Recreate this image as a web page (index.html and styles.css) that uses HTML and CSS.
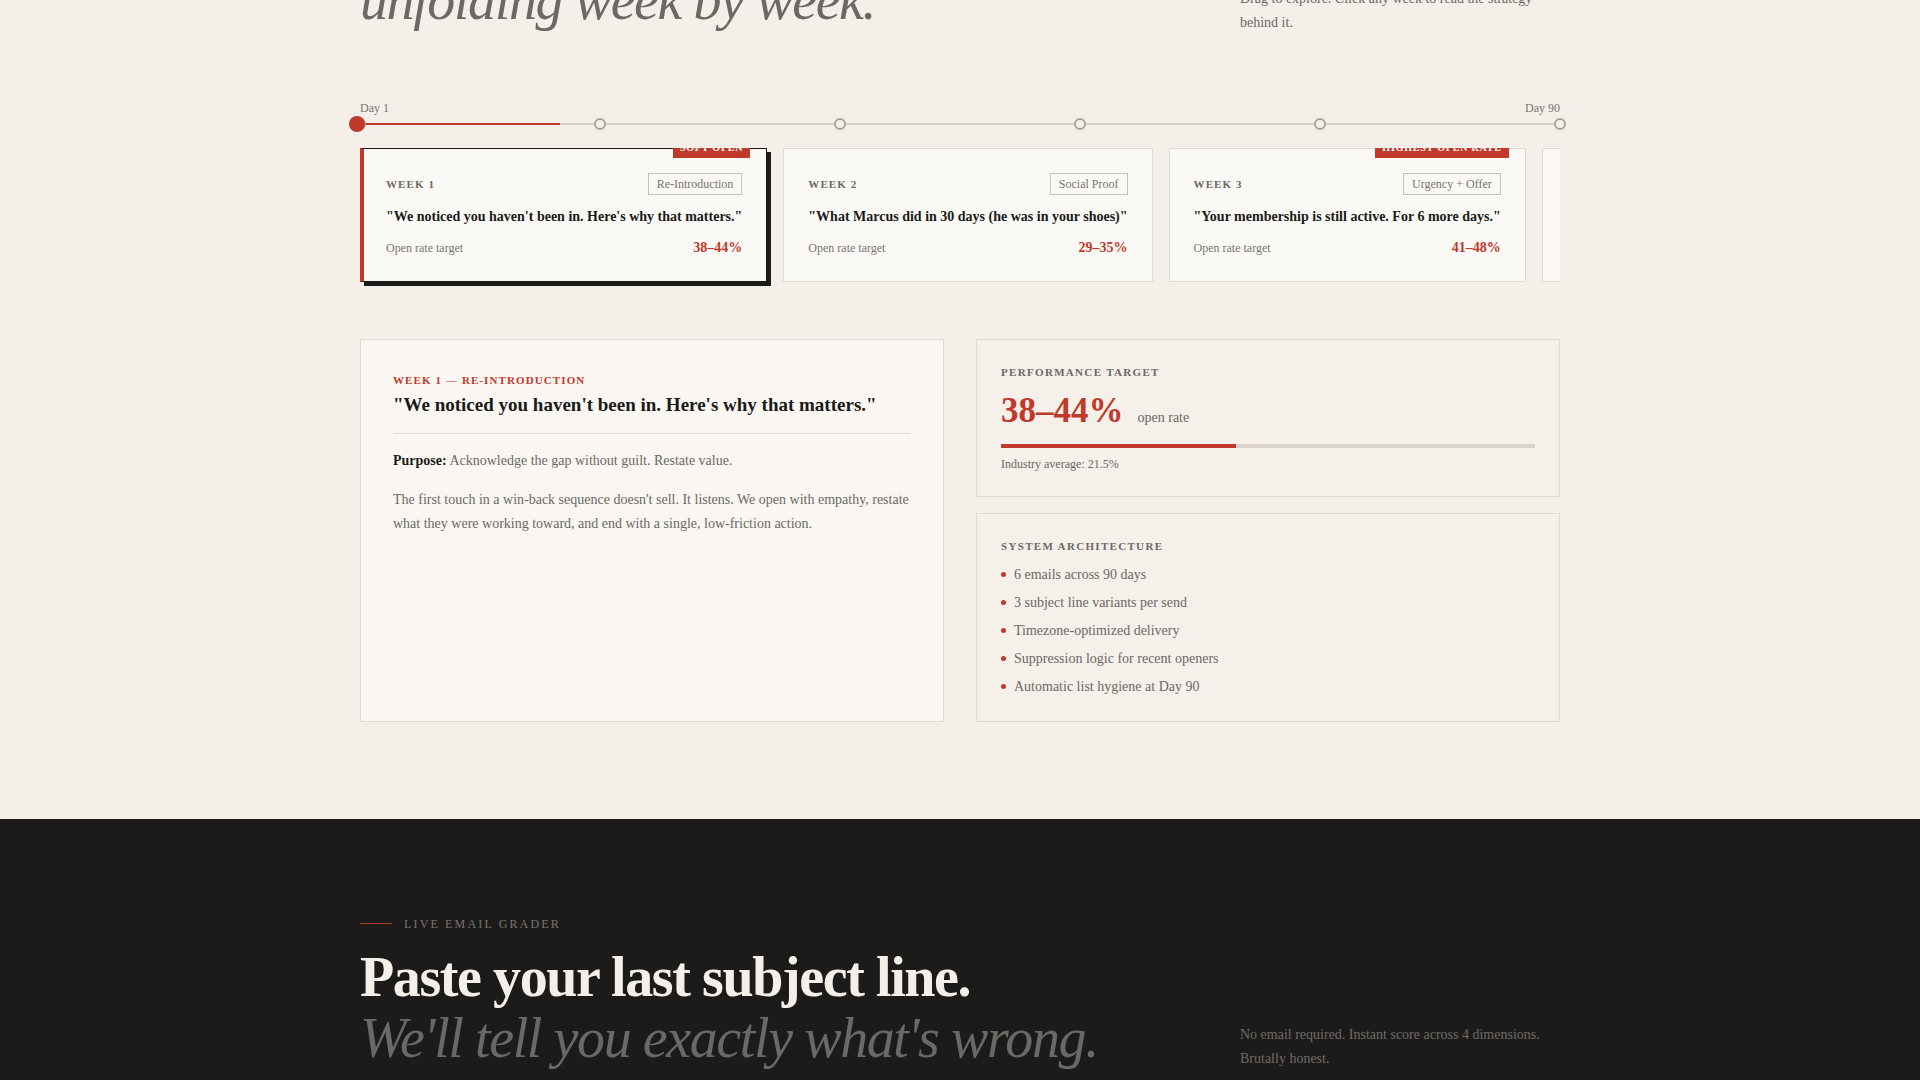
FILE: index.html
```html
<!DOCTYPE html>
<html lang="en">
<head>
<meta charset="UTF-8">
<title>Win-Back Sequence</title>
<link rel="stylesheet" href="styles.css">
</head>
<body>
<section class="sequence">
    <div class="wrap">
        <header class="section-head">
            <h2 class="display"><em>unfolding week by week.</em></h2>
            <p class="aside">Drag to explore. Click any week to read the strategy behind it.</p>
        </header>

        <div class="timeline">
            <div class="timeline-labels">
                <span>Day 1</span>
                <span>Day 90</span>
            </div>
            <div class="track">
                <div class="track-fill" style="width: 16.667%"></div>
                <span class="stop" style="left: 0%"></span>
                <span class="stop" style="left: 20%"></span>
                <span class="stop" style="left: 40%"></span>
                <span class="stop" style="left: 60%"></span>
                <span class="stop" style="left: 80%"></span>
                <span class="stop" style="left: 100%"></span>
                <span class="handle"></span>
            </div>
        </div>

        <div class="weeks">
            <div class="week-card active">
                <span class="flag">Soft Open</span>
                <div class="week-top">
                    <span class="week-num">Week 1</span>
                    <span class="tag">Re-Introduction</span>
                </div>
                <div class="week-subject">"We noticed you haven't been in. Here's why that matters."</div>
                <div class="week-foot">
                    <span>Open rate target</span>
                    <span class="rate">38–44%</span>
                </div>
            </div>
            <div class="week-card">
                <div class="week-top">
                    <span class="week-num">Week 2</span>
                    <span class="tag">Social Proof</span>
                </div>
                <div class="week-subject">"What Marcus did in 30 days (he was in your shoes)"</div>
                <div class="week-foot">
                    <span>Open rate target</span>
                    <span class="rate">29–35%</span>
                </div>
            </div>
            <div class="week-card">
                <span class="flag">Highest Open Rate</span>
                <div class="week-top">
                    <span class="week-num">Week 3</span>
                    <span class="tag">Urgency + Offer</span>
                </div>
                <div class="week-subject">"Your membership is still active. For 6 more days."</div>
                <div class="week-foot">
                    <span>Open rate target</span>
                    <span class="rate">41–48%</span>
                </div>
            </div>
            <div class="week-card">
                <div class="week-top">
                    <span class="week-num">Week 5</span>
                    <span class="tag">Check-In</span>
                </div>
                <div class="week-subject">"Quick question about your goals"</div>
                <div class="week-foot">
                    <span>Open rate target</span>
                    <span class="rate">24–30%</span>
                </div>
            </div>
            <div class="week-card">
                <div class="week-top">
                    <span class="week-num">Week 8</span>
                    <span class="tag">Last Call</span>
                </div>
                <div class="week-subject">"Should we keep your spot?"</div>
                <div class="week-foot">
                    <span>Open rate target</span>
                    <span class="rate">22–28%</span>
                </div>
            </div>
        </div>

        <div class="detail">
            <article class="panel panel-main">
                <div class="eyebrow-red">Week 1 — Re-Introduction</div>
                <h3 class="detail-title">"We noticed you haven't been in. Here's why that matters."</h3>
                <p class="purpose"><strong>Purpose:</strong> Acknowledge the gap without guilt. Restate value.</p>
                <p class="body-copy">The first touch in a win-back sequence doesn't sell. It listens. We open with empathy, restate what they were working toward, and end with a single, low-friction action.</p>
            </article>
            <div class="side">
                <div class="panel panel-side">
                    <div class="panel-label">Performance Target</div>
                    <div class="target">
                        <span class="target-num">38–44%</span>
                        <span class="target-unit">open rate</span>
                    </div>
                    <div class="bar"><div class="bar-fill" style="width: 44%"></div></div>
                    <div class="note">Industry average: 21.5%</div>
                </div>
                <div class="panel panel-side">
                    <div class="panel-label">System Architecture</div>
                    <ul class="dots">
                        <li>6 emails across 90 days</li>
                        <li>3 subject line variants per send</li>
                        <li>Timezone-optimized delivery</li>
                        <li>Suppression logic for recent openers</li>
                        <li>Automatic list hygiene at Day 90</li>
                    </ul>
                </div>
            </div>
        </div>
    </div>
</section>

<section class="grader">
    <div class="wrap">
        <div class="kicker"><span class="kicker-line"></span>Live Email Grader</div>
        <header class="section-head">
            <h2 class="display">Paste your last subject line.<br><em>We'll tell you exactly what's wrong.</em></h2>
            <p class="aside">No email required. Instant score across 4 dimensions. Brutally honest.</p>
        </header>
    </div>
</section>
</body>
</html>
```

FILE: styles.css
```css
* {
    box-sizing: border-box;
}
body {
    margin: 0;
    background-color: #f4efe9;
    color: #1a1a1a;
    font-family: "Liberation Serif", "Times New Roman", serif;
}
.wrap {
    width: 1200px;
    margin: 0 auto;
}

/* shared heading block */
.section-head {
    display: grid;
    grid-template-columns: 1fr 320px;
    align-items: end;
}
.display {
    margin: 0;
    padding-bottom: 1px;
    font-size: 56px;
    line-height: 1.1;
    font-weight: bold;
    letter-spacing: -0.025em;
}
.display em {
    font-weight: normal;
    color: #6b6865;
}
.aside {
    margin: 0;
    font-size: 14px;
    line-height: 24px;
    color: #6b6865;
}

/* sequence section (view scrolled into it) */
.sequence {
    padding-bottom: 97px;
}
.sequence .section-head {
    margin-top: -30px;
    margin-bottom: 65px;
}
.sequence .display {
    padding-bottom: 3px;
}

.timeline-labels {
    display: flex;
    justify-content: space-between;
    font-size: 12px;
    line-height: 16px;
    color: #7a7570;
}
.track {
    position: relative;
    height: 16px;
}
.track::before {
    content: "";
    position: absolute;
    left: 0;
    right: 0;
    top: 7px;
    height: 2px;
    background: #d6d0c9;
}
.track-fill {
    position: absolute;
    left: 0;
    top: 7px;
    height: 2px;
    background: #c0392b;
}
.stop {
    position: absolute;
    top: 2px;
    width: 12px;
    height: 12px;
    margin-left: -6px;
    border: 2px solid #aaa49d;
    border-radius: 50%;
    background: #f4efe9;
}
.handle {
    position: absolute;
    top: 0;
    left: -11px;
    width: 16px;
    height: 16px;
    border-radius: 50%;
    background: #c0392b;
}

/* week cards */
.weeks {
    display: flex;
    gap: 16px;
    margin-top: 16px;
    padding-bottom: 8px;
    overflow: hidden;
}
.week-card {
    position: relative;
    flex: none;
    display: flex;
    flex-direction: column;
    gap: 12px;
    padding: 24px;
    background: #fbf9f5;
    border: 1px solid #e0dad3;
}
.week-card.active {
    border-color: #1a1a1a;
    border-left: 4px solid #c0392b;
    padding-left: 22px;
    box-shadow: 4px 4px 0 #1a1a1a;
}
.flag {
    position: absolute;
    top: -11px;
    right: 16px;
    padding: 4px 7px;
    background: #c0392b;
    color: #fff;
    font-size: 10px;
    line-height: 12px;
    font-weight: bold;
    letter-spacing: 0.08em;
    text-transform: uppercase;
}
.week-top {
    display: flex;
    justify-content: space-between;
    align-items: center;
}
.week-num {
    font-size: 11px;
    font-weight: bold;
    letter-spacing: 0.1em;
    text-transform: uppercase;
    color: #6b6865;
}
.tag {
    height: 22px;
    padding: 0 8px;
    border: 1px solid #c9c3bc;
    font-size: 12px;
    line-height: 20px;
    color: #7a7570;
}
.week-subject {
    font-size: 14px;
    line-height: 20px;
    font-weight: bold;
    white-space: nowrap;
}
.week-foot {
    display: flex;
    justify-content: space-between;
    align-items: baseline;
    font-size: 12px;
    line-height: 18px;
    color: #7a7570;
}
.rate {
    font-size: 14px;
    font-weight: bold;
    color: #c0392b;
}

/* detail area */
.detail {
    display: grid;
    grid-template-columns: 1fr 1fr;
    gap: 32px;
    margin-top: 49px;
}
.panel {
    border: 1px solid #e0dad3;
}
.panel-main {
    padding: 32px;
    background: #faf7f2;
}
.eyebrow-red {
    font-size: 11px;
    line-height: 16px;
    font-weight: bold;
    letter-spacing: 0.1em;
    text-transform: uppercase;
    color: #c0392b;
}
.detail-title {
    margin: 4px 0 0;
    padding-bottom: 16px;
    border-bottom: 1px solid #ddd7d0;
    font-size: 19px;
    line-height: 25px;
}
.purpose,
.body-copy {
    font-size: 14px;
    line-height: 24px;
    color: #6b6865;
}
.purpose {
    margin: 15px 0 0;
}
.purpose strong {
    color: #1a1a1a;
}
.body-copy {
    margin: 15px 0 0;
}

.side {
    display: flex;
    flex-direction: column;
    gap: 16px;
}
.panel-side {
    padding: 24px;
    background: #f5f0ea;
}
.panel-label {
    font-size: 11px;
    line-height: 16px;
    font-weight: bold;
    letter-spacing: 0.12em;
    text-transform: uppercase;
    color: #6b6865;
}
.target {
    display: flex;
    align-items: baseline;
    gap: 14px;
    margin-top: 12px;
}
.target-num {
    font-size: 35px;
    line-height: 38px;
    font-weight: bold;
    color: #c0392b;
}
.target-unit {
    font-size: 14px;
    color: #6b6865;
}
.bar {
    height: 4px;
    margin-top: 14px;
    background: #dbd4cd;
}
.bar-fill {
    height: 100%;
    background: #c0392b;
}
.note {
    margin-top: 8px;
    font-size: 12px;
    line-height: 16px;
    color: #6b6865;
}
.dots {
    list-style: none;
    margin: 11px 0 0;
    padding: 0;
    display: flex;
    flex-direction: column;
    gap: 8px;
}
.dots li {
    display: flex;
    align-items: center;
    gap: 8px;
    font-size: 14px;
    line-height: 20px;
    color: #6b6865;
}
.dots li::before {
    content: "";
    width: 5px;
    height: 5px;
    border-radius: 50%;
    background: #c0392b;
}

/* grader section */
.grader {
    background: #1c1b1a;
    padding: 96px 0 120px;
}
.kicker {
    display: flex;
    align-items: center;
    gap: 12px;
    font-size: 12px;
    line-height: 18px;
    letter-spacing: 0.18em;
    text-transform: uppercase;
    color: #7a7570;
}
.kicker-line {
    width: 32px;
    height: 1px;
    background: #a33a2e;
}
.grader .section-head {
    margin-top: 14px;
}
.grader .display {
    color: #f4efe9;
}
.grader .display em {
    color: #6b6865;
}
.grader .aside {
    color: #6f6b67;
}
```
